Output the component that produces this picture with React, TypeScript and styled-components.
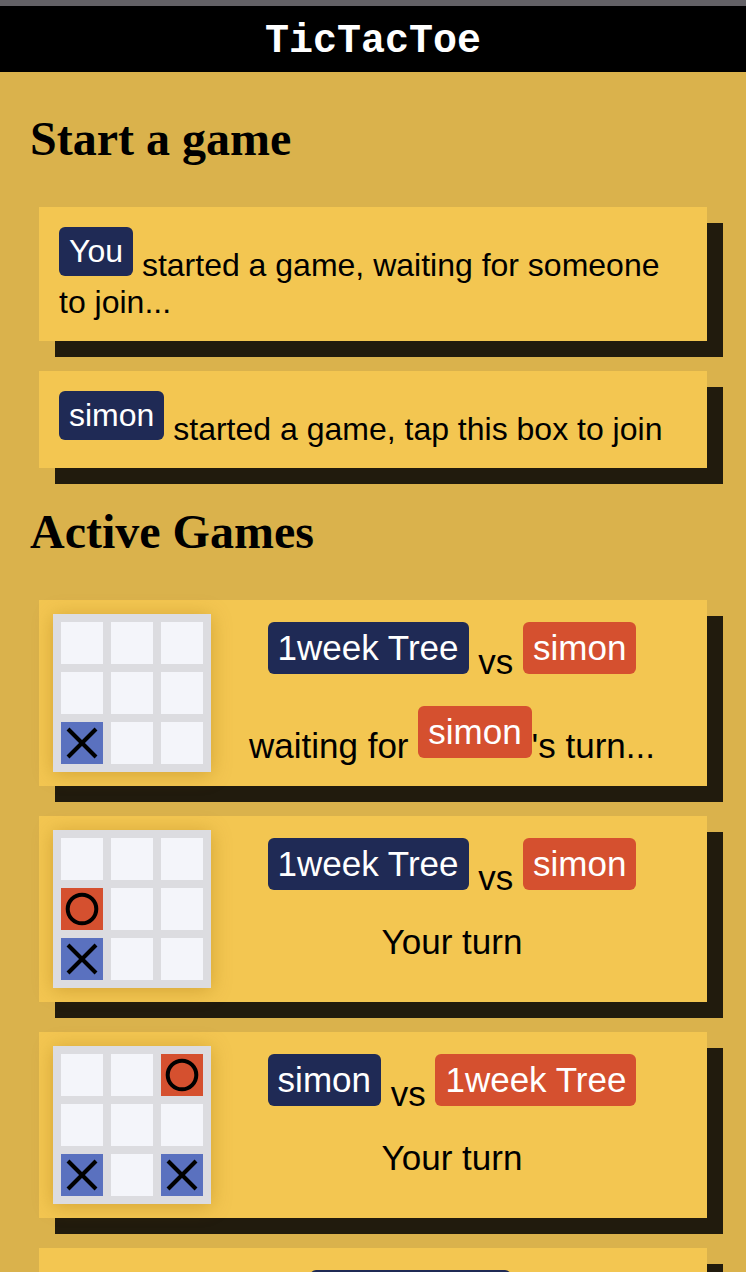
import React from "react";
import styled, { createGlobalStyle } from "styled-components";

type Mark = "X" | "O" | "";
type Tone = "navy" | "orange";

interface Player {
  name: string;
  tone: Tone;
}

interface Game {
  board: string;
  home: Player;
  away: Player;
  status: "waiting" | "yours" | "won";
}

const you: Player = { name: "1week Tree", tone: "navy" };
const simon: Player = { name: "simon", tone: "orange" };

const games: Game[] = [
  { board: "......X..", home: you, away: simon, status: "waiting" },
  { board: "...O..X..", home: you, away: simon, status: "yours" },
  { board: "..O...X.X", home: { name: "simon", tone: "navy" }, away: { name: "1week Tree", tone: "orange" }, status: "yours" },
  { board: "OXO.X.OX.", home: you, away: simon, status: "won" },
];

const toneColor = {
  navy: "#1f2a55",
  orange: "#d5502f",
};

const GlobalStyle = createGlobalStyle`
  body {
    margin: 0;
    background: #dab24c;
    font-family: "Liberation Sans", Arial, sans-serif;
    color: #000;
  }
`

const Header = styled.header`
  height: 72px;
  box-sizing: border-box;
  border-top: 6px solid #636166;
  background: #000;
  display: flex;
  align-items: center;
  justify-content: center;
  padding-top: 4px;
`

const Title = styled.h1`
  margin: 0;
  color: #fff;
  font-family: "Liberation Mono", "Courier New", monospace;
  font-size: 40px;
  font-weight: bold;
  line-height: normal;
`

const Main = styled.main`
  padding-top: 40px;
`

const Section = styled.section`
  & + & {
    margin-top: 37px;
  }
`

const SectionTitle = styled.h2`
  margin: 0 0 42px 30px;
  font-family: "Liberation Serif", "Times New Roman", serif;
  font-size: 48px;
  font-weight: bold;
  line-height: 53px;
`

const CardList = styled.div`
  display: flex;
  flex-direction: column;
  gap: 30px;
  padding: 0 39px;
`

const Card = styled.div`
  background: #f3c651;
  box-shadow: 16px 16px 0 #211b0d;
  padding: 20px;
  font-size: 32px;
  line-height: normal;
`

const GameCard = styled(Card)`
  display: flex;
  align-items: flex-start;
  padding: 14px;
  font-size: 35px;
`

const Badge = styled.span<{ $tone: Tone }>`
  display: inline-block;
  overflow: hidden;
  vertical-align: baseline;
  padding: 6px 10px;
  border-radius: 6px;
  background: ${(p) => toneColor[p.$tone]};
  color: #fff;
`

const Board = styled.div`
  flex: none;
  align-self: center;
  display: grid;
  grid-template-columns: repeat(3, 42px);
  grid-auto-rows: 42px;
  gap: 8px;
  padding: 8px;
  background: #dcdce0;
  box-shadow: 0 2px 18px rgba(150, 100, 0, 0.35);
`

const Cell = styled.div<{ $mark: Mark }>`
  background: ${(p) => (p.$mark === "X" ? "#5a71bf" : p.$mark === "O" ? "#d5502f" : "#f4f5fa")};
  svg {
    display: block;
  }
`

const Info = styled.div`
  flex: 1;
  display: flex;
  flex-direction: column;
  gap: 24px;
  padding-top: 8px;
  text-align: center;
`

const Line = styled.div`
  margin: 0;
`

const Glyph = ({ mark }: { mark: Mark }) => {
  if (mark === "X") {
    return (
      <svg width="42" height="42" viewBox="0 0 42 42">
        <line x1="7" y1="7" x2="35" y2="35" stroke="#000" strokeWidth="4" />
        <line x1="35" y1="7" x2="7" y2="35" stroke="#000" strokeWidth="4" />
      </svg>
    );
  }
  if (mark === "O") {
    return (
      <svg width="42" height="42" viewBox="0 0 42 42">
        <circle cx="21" cy="21" r="14.3" fill="none" stroke="#000" strokeWidth="4" />
      </svg>
    );
  }
  return null;
};

const Status = ({ game }: { game: Game }) => {
  if (game.status === "waiting") {
    return (
      <Line>
        waiting for <Badge $tone={game.away.tone}>{game.away.name}</Badge>'s turn...
      </Line>
    );
  }
  if (game.status === "won") {
    return <Line>Game over</Line>;
  }
  return <Line>Your turn</Line>;
};

const GameRow = ({ game }: { game: Game }) => (
  <GameCard>
    <Board>
      {game.board.split("").map((c, i) => {
        const mark: Mark = c === "X" || c === "O" ? c : "";
        return (
          <Cell key={i} $mark={mark}>
            <Glyph mark={mark} />
          </Cell>
        );
      })}
    </Board>
    <Info>
      {game.status === "won" ? (
        <>
          <Line>
            <Badge $tone={game.home.tone}>{game.home.name}</Badge> won!
          </Line>
          <Line>
            vs <Badge $tone={game.away.tone}>{game.away.name}</Badge>
          </Line>
        </>
      ) : (
        <Line>
          <Badge $tone={game.home.tone}>{game.home.name}</Badge> vs <Badge $tone={game.away.tone}>{game.away.name}</Badge>
        </Line>
      )}
      <Status game={game} />
    </Info>
  </GameCard>
);

const App = () => {
  return (
    <>
      <GlobalStyle />
      <Header>
        <Title>TicTacToe</Title>
      </Header>
      <Main>
        <Section>
          <SectionTitle>Start a game</SectionTitle>
          <CardList>
            <Card>
              <Badge $tone="navy">You</Badge> started a game, waiting for someone to join...
            </Card>
            <Card>
              <Badge $tone="navy">simon</Badge> started a game, tap this box to join
            </Card>
          </CardList>
        </Section>
        <Section>
          <SectionTitle>Active Games</SectionTitle>
          <CardList>
            {games.map((g, i) => (
              <GameRow key={i} game={g} />
            ))}
          </CardList>
        </Section>
      </Main>
    </>
  );
};

export default App;
